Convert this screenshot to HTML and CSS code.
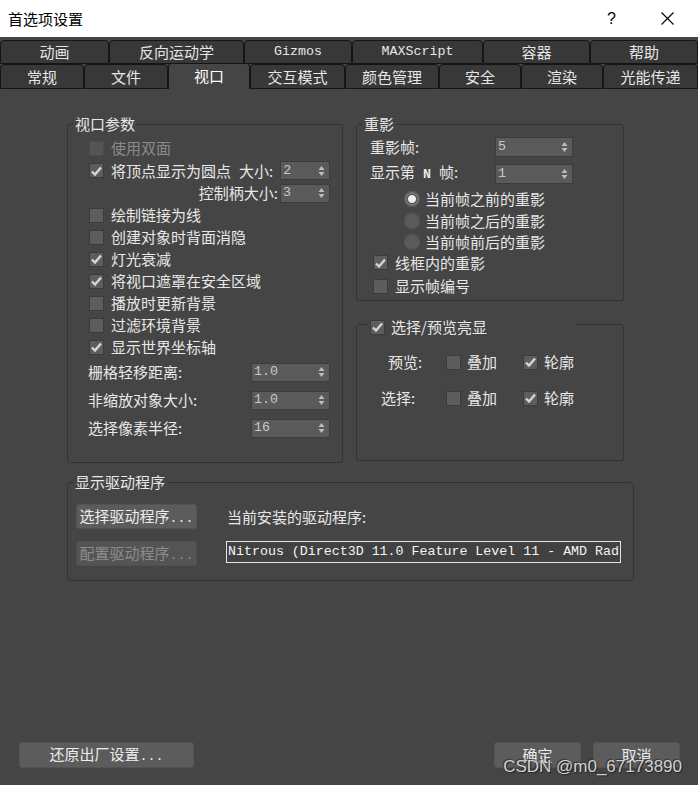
FILE: index.html
```html
<!DOCTYPE html>
<html lang="zh-CN">
<head>
  <meta charset="UTF-8">
  <title>首选项设置</title>
  <meta name="viewport" content="width=device-width, initial-scale=1.0">
  <link rel="stylesheet" href="styles.css">
</head>
<body>

  <div class="titlebar">
    <span class="title">首选项设置</span>
    <span class="help">?</span>
    <svg class="close" width="13" height="13" viewBox="0 0 13 13">
      <path d="M0.5 0.5 L12.5 12.5 M12.5 0.5 L0.5 12.5" stroke="#000" stroke-width="1.1"/>
    </svg>
  </div>

  <!-- two rows of tabs, the lower one holds the open page -->
  <div class="tabs">
    <div class="tab-row upper">
      <div class="tab">动画</div>
      <div class="tab">反向运动学</div>
      <div class="tab mono">Gizmos</div>
      <div class="tab mono">MAXScript</div>
      <div class="tab">容器</div>
      <div class="tab">帮助</div>
    </div>
    <div class="tab-row lower">
      <div class="tab">常规</div>
      <div class="tab">文件</div>
      <div class="tab active">视口</div>
      <div class="tab">交互模式</div>
      <div class="tab">颜色管理</div>
      <div class="tab">安全</div>
      <div class="tab">渲染</div>
      <div class="tab">光能传递</div>
    </div>
  </div>

  <div class="page">
    <div class="columns">

      <fieldset class="group">
        <legend>视口参数</legend>
        <div class="params">
          <div class="row disabled"><span class="check"></span>使用双面</div>
          <div class="row tall">
            <span class="check on"><svg width="11" height="10" viewBox="0 0 11 10"><path d="M1 5.5 L4 8.5 L10 1.5" /></svg></span>
            将顶点显示为圆点
            <span class="size-label">大小:</span>
            <div class="spin small"><span class="val">2</span><svg class="arrows" width="7" height="12" viewBox="0 0 7 12"><path d="M3.5 1 L6.5 5 L0.5 5 Z M0.5 7 L6.5 7 L3.5 11 Z"/></svg></div>
          </div>
          <div class="row tall-end">
            控制柄大小:
            <div class="spin small"><span class="val">3</span><svg class="arrows" width="7" height="12" viewBox="0 0 7 12"><path d="M3.5 1 L6.5 5 L0.5 5 Z M0.5 7 L6.5 7 L3.5 11 Z"/></svg></div>
          </div>
          <div class="row"><span class="check"></span>绘制链接为线</div>
          <div class="row"><span class="check"></span>创建对象时背面消隐</div>
          <div class="row"><span class="check on"><svg width="11" height="10" viewBox="0 0 11 10"><path d="M1 5.5 L4 8.5 L10 1.5" /></svg></span>灯光衰减</div>
          <div class="row"><span class="check on"><svg width="11" height="10" viewBox="0 0 11 10"><path d="M1 5.5 L4 8.5 L10 1.5" /></svg></span>将视口遮罩在安全区域</div>
          <div class="row"><span class="check"></span>播放时更新背景</div>
          <div class="row"><span class="check"></span>过滤环境背景</div>
          <div class="row"><span class="check on"><svg width="11" height="10" viewBox="0 0 11 10"><path d="M1 5.5 L4 8.5 L10 1.5" /></svg></span>显示世界坐标轴</div>
          <div class="row field-row">
            栅格轻移距离:
            <div class="spin wide"><span class="val">1.0</span><svg class="arrows" width="7" height="12" viewBox="0 0 7 12"><path d="M3.5 1 L6.5 5 L0.5 5 Z M0.5 7 L6.5 7 L3.5 11 Z"/></svg></div>
          </div>
          <div class="row field-row">
            非缩放对象大小:
            <div class="spin wide"><span class="val">1.0</span><svg class="arrows" width="7" height="12" viewBox="0 0 7 12"><path d="M3.5 1 L6.5 5 L0.5 5 Z M0.5 7 L6.5 7 L3.5 11 Z"/></svg></div>
          </div>
          <div class="row field-row">
            选择像素半径:
            <div class="spin wide"><span class="val">16</span><svg class="arrows" width="7" height="12" viewBox="0 0 7 12"><path d="M3.5 1 L6.5 5 L0.5 5 Z M0.5 7 L6.5 7 L3.5 11 Z"/></svg></div>
          </div>
        </div>
      </fieldset>

      <div class="right-col">
        <fieldset class="group">
          <legend>重影</legend>
          <div class="ghost">
            <div class="ghost-field">
              <span>重影帧:</span>
              <div class="spin"><span class="val">5</span><svg class="arrows" width="7" height="12" viewBox="0 0 7 12"><path d="M3.5 1 L6.5 5 L0.5 5 Z M0.5 7 L6.5 7 L3.5 11 Z"/></svg></div>
            </div>
            <div class="ghost-field second">
              <span>显示第<b class="nth">N</b>帧:</span>
              <div class="spin"><span class="val">1</span><svg class="arrows" width="7" height="12" viewBox="0 0 7 12"><path d="M3.5 1 L6.5 5 L0.5 5 Z M0.5 7 L6.5 7 L3.5 11 Z"/></svg></div>
            </div>
            <div class="row radio-row first"><span class="radio on"></span>当前帧之前的重影</div>
            <div class="row radio-row"><span class="radio"></span>当前帧之后的重影</div>
            <div class="row radio-row"><span class="radio"></span>当前帧前后的重影</div>
            <div class="row ghost-check"><span class="check on"><svg width="11" height="10" viewBox="0 0 11 10"><path d="M1 5.5 L4 8.5 L10 1.5" /></svg></span>线框内的重影</div>
            <div class="row ghost-check last"><span class="check"></span>显示帧编号</div>
          </div>
        </fieldset>

        <fieldset class="group highlight">
          <legend>
            <span class="check on"><svg width="11" height="10" viewBox="0 0 11 10"><path d="M1 5.5 L4 8.5 L10 1.5" /></svg></span>
            选择/预览亮显
          </legend>
          <div class="hl-grid">
            <span class="hl-label preview">预览:</span>
            <span class="row"><span class="check"></span>叠加</span>
            <span class="row"><span class="check on"><svg width="11" height="10" viewBox="0 0 11 10"><path d="M1 5.5 L4 8.5 L10 1.5" /></svg></span>轮廓</span>
            <span class="hl-label select">选择:</span>
            <span class="row"><span class="check"></span>叠加</span>
            <span class="row"><span class="check on"><svg width="11" height="10" viewBox="0 0 11 10"><path d="M1 5.5 L4 8.5 L10 1.5" /></svg></span>轮廓</span>
          </div>
        </fieldset>
      </div>
    </div>

    <fieldset class="group drivers">
      <legend>显示驱动程序</legend>
      <div class="driver-grid">
        <button class="btn">选择驱动程序<span class="dots">...</span></button>
        <span class="driver-label">当前安装的驱动程序:</span>
        <button class="btn" disabled>配置驱动程序<span class="dots">...</span></button>
        <div class="driver-name mono">Nitrous (Direct3D 11.0 Feature Level 11 - AMD Rad</div>
      </div>
    </fieldset>
  </div>

  <div class="footer">
    <button class="btn reset">还原出厂设置<span class="dots">...</span></button>
    <div class="footer-right">
      <button class="btn action">确定</button>
      <button class="btn action">取消</button>
    </div>
  </div>

  <div class="watermark">CSDN @m0_67173890</div>

</body>
</html>
```

FILE: styles.css
```css
* {
  box-sizing: border-box;
}
body {
  margin: 0;
  height: 100vh;
  display: flex;
  flex-direction: column;
  background: #454545;
  color: #e8e8e8;
  font-family: "Noto Sans CJK SC", "Liberation Mono", monospace;
  font-size: 15px;
  line-height: 22px;
  overflow: hidden;
  position: relative;
}
.mono {
  font-family: "Liberation Mono", monospace;
  font-size: 13.3px;
}

/* window title */
.titlebar {
  height: 37px;
  flex: none;
  display: flex;
  align-items: center;
  background: #fff;
  color: #000;
  padding: 0 24px 0 8px;
}
.titlebar .title {
  flex: 1;
  font-size: 15px;
}
.titlebar .help {
  font-family: "Liberation Sans", sans-serif;
  font-size: 16px;
  margin-right: 45px;
}

/* tabs */
.tabs {
  margin-top: 3px;
  flex: none;
}
.tab-row {
  display: grid;
  height: 24px;
}
.tab-row.upper {
  grid-template-columns: 109px 135px 108px 131px 107px 108px;
}
.tab-row.lower {
  grid-template-columns: 84px 84px 82px 95px 94px 82px 82px 95px;
  height: 25px;
}
.tab {
  border: 1px solid #151515;
  border-radius: 4px 4px 0 0;
  background: #383838;
  color: #e6e6e6;
  text-align: center;
  line-height: 22px;
}
.tab.mono {
  font-size: 13.3px;
}
.tab-row.lower .tab {
  line-height: 23px;
}
.tab.active {
  background: #454545;
  border-bottom: none;
  margin-top: -1px;
  color: #fff;
}

/* page body */
.page {
  padding: 25px 0 0 67px;
}
.columns {
  display: grid;
  grid-template-columns: 276px 268px;
  column-gap: 13px;
  align-items: start;
}
fieldset.group {
  margin: 0;
  padding: 0;
  border: 1px solid #333;
  border-radius: 3px;
  min-width: 0;
}
.group legend {
  margin-left: 5px;
  padding: 0 2px;
  line-height: 20px;
  color: #e8e8e8;
}

.row {
  display: flex;
  align-items: center;
  height: 22px;
  gap: 7px;
  white-space: nowrap;
}
.row.disabled {
  color: #8a8a8a;
}
.check {
  width: 15px;
  height: 15px;
  flex: none;
  display: grid;
  place-items: center;
  background: #5d5d5d;
  border: 1px solid #3b3b3b;
}
.check svg path {
  fill: none;
  stroke: #d6d6d6;
  stroke-width: 2.4;
}
.row.disabled .check {
  background: #555;
  border-color: #4a4a4a;
}

/* spinner boxes */
.spin {
  height: 19px;
  display: flex;
  align-items: center;
  justify-content: space-between;
  padding: 0 4px 0 2px;
  background: #5a5a5a;
  border: 1px solid #3c3c3c;
}
.spin .val {
  font-family: "Liberation Mono", monospace;
  font-size: 13.3px;
  color: #c8c8c8;
}
.spin .arrows path {
  fill: #bdbdbd;
}
.spin.small {
  width: 50px;
}
.spin.wide {
  width: 79px;
}

/* left group */
.params {
  padding: 3px 12px 20px 21px;
}
.params .row.tall {
  height: 23px;
}
.params .size-label {
  margin-left: 1px;
}
.params .tall .spin {
  margin-left: auto;
}
.params .tall-end {
  justify-content: flex-end;
  gap: 2px;
}
.params .field-row {
  height: 28px;
  margin-left: -1px;
  justify-content: space-between;
}

/* ghosting group */
.ghost {
  padding: 2px 0 3px 13px;
}
.ghost-field {
  display: grid;
  grid-template-columns: 125px 78px;
  align-items: center;
  height: 22px;
}
.ghost-field .spin {
  height: 20px;
}
.ghost-field.second {
  margin-top: 3px;
}
.ghost-field .nth {
  margin: 0 8px;
  font-family: "Liberation Mono", monospace;
  font-size: 13.3px;
}
.radio-row {
  padding-left: 34px;
  height: 21px;
  gap: 5px;
}
.radio-row.first {
  margin-top: 5px;
  height: 22px;
}
.radio {
  width: 16px;
  height: 16px;
  flex: none;
  border-radius: 50%;
  background: #5a5a5a;
  box-shadow: inset 0 0 0 1px #525252;
}
.radio.on {
  background: radial-gradient(circle, #ececec 0 3.5px, #555 4.5px 5px, #757575 5.5px);
}
.ghost-check {
  padding-left: 3px;
  height: 21px;
}
.ghost-check.last {
  margin-top: 2px;
  height: 22px;
}

/* highlight group, its title carries a checkbox */
.highlight {
  margin-top: 10px !important;
}
.highlight legend {
  margin-left: 11px;
  padding: 6px 2px 0;
  width: 208px;
  display: flex;
  align-items: center;
  gap: 6px;
}
.hl-grid {
  display: grid;
  grid-template-columns: 89px 77px auto;
  grid-auto-rows: 22px;
  row-gap: 14px;
  padding: 14px 0 51px;
}
.hl-grid .row {
  gap: 6px;
}
.hl-label.preview {
  padding-left: 31px;
}
.hl-label.select {
  padding-left: 24px;
}

/* display driver group */
.drivers {
  width: 567px;
  margin-top: 9px !important;
}
.driver-grid {
  display: grid;
  grid-template-columns: 121px 1fr;
  grid-auto-rows: 25px;
  column-gap: 29px;
  row-gap: 12px;
  padding: 12px 12px 14px 8px;
}
.driver-label {
  padding-left: 1px;
  line-height: 25px;
}
.driver-name {
  height: 22px;
  line-height: 20px;
  padding-left: 1px;
  border: 1px solid #e4e4e4;
  background: #414141;
  color: #f4f4f4;
  white-space: nowrap;
  overflow: hidden;
}

/* buttons */
.btn {
  font: inherit;
  color: #ececec;
  background: #5c5c5c;
  border: 1px solid #535353;
  border-radius: 3px;
  padding: 0;
  cursor: pointer;
  white-space: nowrap;
}
.btn .dots {
  font-family: "Liberation Mono", monospace;
  font-size: 13.3px;
}
.btn:disabled {
  color: #8c8c8c;
  background: #545454;
  border-color: #4f4f4f;
}

.footer {
  margin-top: auto;
  display: flex;
  justify-content: space-between;
  padding: 0 18px 17px 19px;
}
.footer .btn {
  height: 26px;
}
.footer .reset {
  width: 175px;
}
.footer-right {
  display: flex;
  gap: 12px;
}
.footer .action {
  width: 87px;
}

.watermark {
  position: absolute;
  right: 16px;
  bottom: 8px;
  font-family: "Liberation Sans", sans-serif;
  font-size: 17px;
  line-height: 20px;
  color: #d2d2d2;
  text-shadow: 1px 1px 1px #222, -1px -1px 1px #333;
}
```
